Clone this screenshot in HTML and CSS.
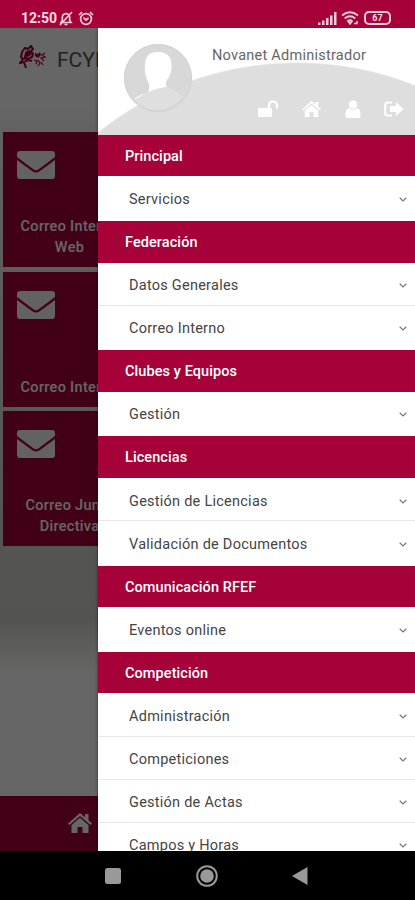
FILE: index.html
```
<!DOCTYPE html>
<html lang="es">
<head>
    <meta charset="UTF-8">
    <meta name="viewport" content="width=device-width, initial-scale=1.0">
    <title>FCYLF</title>
    <link rel="stylesheet" href="styles.css">
</head>
<body>
    <svg class="sprite">
        <symbol id="mail" viewBox="0 0 38 28">
            <path d="M3 0H35Q38 0 38 3V6L22 18Q19 20.500 16 18L0 6V3Q0 0 3 0Z"/>
            <path d="M0 9L15 20Q19 23 23 20L38 9V25Q38 28 35 28H3Q0 28 0 25Z"/>
        </symbol>
        <symbol id="home" viewBox="0 0 24 20">
            <path d="M12 0L17 4.300V1H20.500V7.300L24 10.500L22.500 12L12 3L1.500 12L0 10.500Z"/>
            <path d="M12 4.800L20.500 12V20H14.500V14H9.500V20H3.500V12Z"/>
        </symbol>
        <symbol id="down" viewBox="0 0 8 5">
            <path d="M.7 .8L4 3.900L7.300 .8" fill="none" stroke="#777" stroke-width="1.200"/>
        </symbol>
    </svg>

    <div class="phone">
        <div class="status">
            <span class="clock">12:50</span>
            <svg class="bell" width="14" height="15" viewBox="0 0 14 15">
                <path d="M2 11.500H12L10.700 9.500V6Q10.500 3 7 2.500Q3.500 3 3.300 6V9.500ZM5.500 13.500H8.500M1 14L13 1"/>
            </svg>
            <svg class="alarm" width="16" height="15" viewBox="0 0 16 15">
                <circle cx="8" cy="8" r="5.400"/>
                <path d="M1 4L4 1.200M15 4L12 1.200M5.500 6.500L8 9L10.500 7"/>
            </svg>
            <svg class="signal" width="19" height="13" viewBox="0 0 19 13">
                <path d="M0 13V10.500H2.500V13ZM4 13V8.500H6.500V13ZM8 13V6H10.500V13ZM12 13V3.500H14.500V13ZM16 13V0H18.500V13Z"/>
            </svg>
            <svg class="wifi" width="18" height="14" viewBox="0 0 18 14">
                <path d="M1 4.500Q9 -2 17 4.500M3.700 7.500Q9 3 14.300 7.500M6.300 10.300Q9 8 11.500 10.300"/>
                <path d="M7.500 11L9 13L10.500 11ZM13 12.500H16V10" stroke-width="1.500"/>
            </svg>
            <span class="battery">67</span>
        </div>

        <div class="screen">
            <div class="home">
                <div class="topbar">
                    <svg class="logo" width="28" height="26" viewBox="0 0 28 26">
                        <path d="M3 7L6 3L9 4L12 1L14 4L12 6L14 9L13 12L9 14L6 12L7 8L9 6M3 7L2 12L4 14L1 18L5 17L7 23M4 14L8 13M6 16L10 15L13 16" fill="none" stroke="#a60239" stroke-width="2"/>
                        <path d="M7 7L11 5L13 9L9 12L6 11ZM16 8L19 9L21 7L22 10L19 13L16 11Z" fill="#a60239"/>
                        <path d="M26 8L23 10L26 12L22 13L25 16M15 15L18 16L17 19M19 15L21 18L19 21M22 17L24 20" fill="none" stroke="#a60239" stroke-width="1.200"/>
                    </svg>
                    <span>FCYLF</span>
                </div>
                <div class="tiles">
                    <div class="tile"><svg><use href="#mail"/></svg><p>Correo Interno<br>Web</p></div>
                    <div class="tile"><svg><use href="#mail"/></svg><p>Correo Interno</p></div>
                    <div class="tile"><svg><use href="#mail"/></svg><p>Correo Junta<br>Directiva</p></div>
                </div>
                <div class="footer"><svg><use href="#home"/></svg></div>
            </div>
            <div class="overlay"></div>

            <div class="drawer">
                <div class="profile">
                    <svg class="avatar" width="70" height="70" viewBox="0 0 70 70">
                        <circle cx="35" cy="35" r="34" fill="#d8d8d8"/>
                        <path d="M22 22Q22 9 35 9Q48 9 48.500 22Q49 31 44 37Q42 41 44 44Q31 45 11 57Q13 53 24 50Q27 48 26 41Q21 32 22 22Z" fill="#fff"/>
                        <path d="M11 57Q28 46 44 44Q53 47 59 54Q49 67 35 67Q20 67 11 57Z" fill="#dfdfdf"/>
                        <circle cx="35" cy="35" r="33.500" fill="none" stroke="#d2d2d2"/>
                    </svg>
                    <div class="user">
                        <div class="name">Novanet Administrador</div>
                        <div class="actions">
                            <svg width="22" height="18" viewBox="0 0 22 18">
                                <rect x="1" y="8" width="14" height="9" rx="1"/>
                                <path d="M12 9V6Q12 1.500 16 1.500Q20 1.500 20 6V8.500" fill="none" stroke="#fff" stroke-width="2.200"/>
                            </svg>
                            <svg width="19" height="16"><use href="#home"/></svg>
                            <svg width="16" height="18" viewBox="0 0 16 18">
                                <circle cx="8" cy="4.500" r="4.300"/>
                                <path d="M4 8Q8 11 12 8Q15.500 9 15.500 14V16Q15.500 18 13.500 18H2.500Q.5 18 .5 16V14Q.5 9 4 8Z"/>
                            </svg>
                            <svg width="20" height="16" viewBox="0 0 20 16">
                                <path d="M8 1.500H4Q1.200 1.500 1.200 4V12Q1.200 14.500 4 14.500H8" fill="none" stroke="#fff" stroke-width="2"/>
                                <path d="M6 5H12V1L19.500 8L12 15V11H6Z"/>
                            </svg>
                        </div>
                    </div>
                </div>

                <div class="section">
                    <h2>Principal</h2>
                    <div class="item">Servicios<svg><use href="#down"/></svg></div>
                </div>
                <div class="section">
                    <h2>Federación</h2>
                    <div class="item">Datos Generales<svg><use href="#down"/></svg></div>
                    <div class="item">Correo Interno<svg><use href="#down"/></svg></div>
                </div>
                <div class="section">
                    <h2>Clubes y Equipos</h2>
                    <div class="item">Gestión<svg><use href="#down"/></svg></div>
                </div>
                <div class="section">
                    <h2>Licencias</h2>
                    <div class="item">Gestión de Licencias<svg><use href="#down"/></svg></div>
                    <div class="item">Validación de Documentos<svg><use href="#down"/></svg></div>
                </div>
                <div class="section">
                    <h2>Comunicación RFEF</h2>
                    <div class="item">Eventos online<svg><use href="#down"/></svg></div>
                </div>
                <div class="section">
                    <h2>Competición</h2>
                    <div class="item">Administración<svg><use href="#down"/></svg></div>
                    <div class="item">Competiciones<svg><use href="#down"/></svg></div>
                    <div class="item">Gestión de Actas<svg><use href="#down"/></svg></div>
                    <div class="item">Campos y Horas<svg><use href="#down"/></svg></div>
                </div>
            </div>
        </div>

        <div class="navbar">
            <svg width="16" height="16"><rect width="16" height="16" rx="2.500"/></svg>
            <svg width="22" height="22" viewBox="0 0 22 22">
                <circle cx="11" cy="11" r="9.800" fill="none" stroke="#999" stroke-width="2"/>
                <circle cx="11" cy="11" r="6.800"/>
            </svg>
            <svg width="16" height="18" viewBox="0 0 16 18"><path d="M0 9L15.500 0V18Z"/></svg>
        </div>
    </div>
</body>
</html>
```
FILE: styles.css
```
* {
    box-sizing: border-box;
}
body {
    margin: 0;
    font-family: Roboto, "Liberation Sans", sans-serif;
    background: #000;
}
svg {
    flex: none;
}
.sprite {
    position: absolute;
    width: 0;
    height: 0;
}
.phone {
    width: 415px;
    height: 900px;
    display: flex;
    flex-direction: column;
    overflow: hidden;
}
.status {
    height: 28px;
    background: #a60239;
    color: #f8dce5;
    display: flex;
    align-items: center;
    padding: 8px 24px 0 21px;
}
.status svg {
    fill: none;
    stroke: #f3cbd8;
    stroke-width: 1.7;
}
.clock {
    width: 36px;
    font-size: 14px;
    font-weight: 700;
    white-space: nowrap;
}
.bell {
    margin-left: 2px;
}
.alarm {
    margin-left: 5px;
}
.status .signal {
    margin-left: auto;
    fill: #f3cbd8;
    stroke: none;
}
.wifi {
    margin: 0 5px 0 4px;
}
.battery {
    width: 27px;
    height: 14px;
    border: 2px solid #f3cbd8;
    border-radius: 5px;
    font-size: 9px;
    font-weight: 700;
    line-height: 10px;
    text-align: center;
}

.screen {
    position: relative;
    height: 823px;
    overflow: hidden;
}
.home {
    height: 100%;
    display: flex;
    flex-direction: column;
    background: linear-gradient(#fff 70px, #f4f4f4 110px, #d2d3cd 520px, #d0d1ca 590px, #fff 645px);
}
.topbar {
    height: 104px;
    display: flex;
    padding: 17px 0 0 19px;
    color: #555;
    font-size: 21px;
    line-height: 30px;
}
.topbar span {
    margin-left: 10px;
}
.tiles {
    display: flex;
    flex-direction: column;
    gap: 4.500px;
    padding-left: 3px;
}
.tile {
    width: 133px;
    height: 135px;
    padding: 19px 0 9px;
    background: #a60239;
    color: #fff;
    display: flex;
    flex-direction: column;
    justify-content: space-between;
}
.tile svg {
    width: 38px;
    height: 28px;
    margin-left: 14px;
    fill: #f4f4f4;
}
.tile p {
    margin: 0;
    font-size: 14.500px;
    font-weight: 500;
    line-height: 21px;
    letter-spacing: 0.3px;
    text-align: center;
    white-space: nowrap;
}
.footer {
    height: 55px;
    margin-top: auto;
    padding: 17px 0 0 68px;
    background: #a60239;
}
.footer svg {
    width: 24px;
    height: 20px;
    fill: #fff;
}
.overlay {
    position: absolute;
    inset: 0;
    background: rgba(0, 0, 0, 0.6);
}

.drawer {
    position: absolute;
    top: 0;
    left: 98px;
    right: 0;
    bottom: 0;
    overflow: hidden;
    background: #fff;
    box-shadow: 0 0 3px rgba(0, 0, 0, 0.6);
}
.profile {
    height: 106.700px;
    display: flex;
    padding: 15px 0 0 25px;
    background: radial-gradient(circle 320px at 199px 354px, #dedede 99.500%, #fff 100%);
}
.user {
    width: 281px;
    margin-left: 19px;
}
.name {
    padding-top: 4px;
    font-size: 14.500px;
    line-height: 18px;
    letter-spacing: 0.25px;
    color: #666;
}
.actions {
    display: flex;
    justify-content: space-between;
    align-items: center;
    width: 147px;
    margin: 34px 0 0 45px;
    height: 20px;
    fill: #fff;
}
h2 {
    margin: 0;
    height: 41.700px;
    padding-left: 27px;
    background: #a60239;
    color: #fff;
    font-size: 14.500px;
    font-weight: 500;
    line-height: 44px;
    letter-spacing: 0.08px;
}
.section {
    padding-bottom: 1.400px;
}
.item {
    height: 43.100px;
    display: flex;
    align-items: center;
    justify-content: space-between;
    padding: 4px 8px 0 31px;
    border-bottom: 1px solid #e8e8e8;
    color: #444;
    font-size: 14.500px;
    letter-spacing: 0.25px;
}
.item:last-child {
    border-bottom: none;
    padding-top: 3px;
}
.item svg {
    width: 8px;
    height: 5px;
}

.navbar {
    height: 49px;
    background: #000;
    display: flex;
    align-items: center;
    justify-content: space-between;
    padding: 0 107px 0 105px;
    fill: #999;
}
```
